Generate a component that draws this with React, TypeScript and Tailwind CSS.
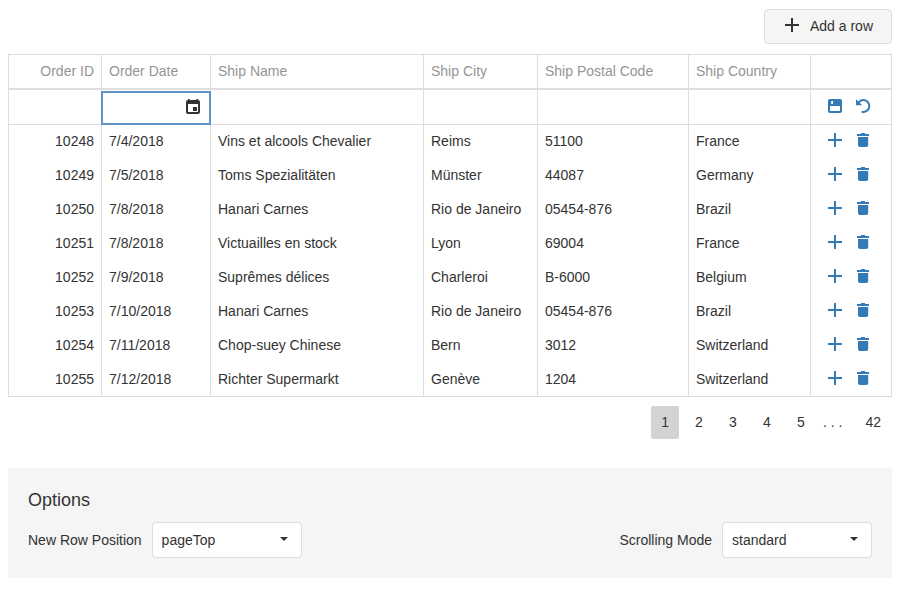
import React from "react";

type Order = [string, string, string, string, string, string];

const columns = [
  { title: "Order ID", width: "w-[93px]" },
  { title: "Order Date", width: "w-[109px]" },
  { title: "Ship Name", width: "" },
  { title: "Ship City", width: "w-[114px]" },
  { title: "Ship Postal Code", width: "w-[151px]" },
  { title: "Ship Country", width: "w-[122px]" },
];

const orders: Order[] = [
  ["10248", "7/4/2018", "Vins et alcools Chevalier", "Reims", "51100", "France"],
  ["10249", "7/5/2018", "Toms Spezialitäten", "Münster", "44087", "Germany"],
  ["10250", "7/8/2018", "Hanari Carnes", "Rio de Janeiro", "05454-876", "Brazil"],
  ["10251", "7/8/2018", "Victuailles en stock", "Lyon", "69004", "France"],
  ["10252", "7/9/2018", "Suprêmes délices", "Charleroi", "B-6000", "Belgium"],
  ["10253", "7/10/2018", "Hanari Carnes", "Rio de Janeiro", "05454-876", "Brazil"],
  ["10254", "7/11/2018", "Chop-suey Chinese", "Bern", "3012", "Switzerland"],
  ["10255", "7/12/2018", "Richter Supermarkt", "Genève", "1204", "Switzerland"],
];

function PlusIcon({ className }: { className: string }) {
  return (
    <svg viewBox="0 0 14 14" className={className} fill="currentColor" aria-hidden="true">
      <path d="M6 0h2v6h6v2H8v6H6V8H0V6h6z" />
    </svg>
  );
}

function TrashIcon() {
  return (
    <svg viewBox="0 0 14 14" className="size-3.5" fill="currentColor" aria-hidden="true">
      <path d="M5 0h4v1h4v1.900H1V1h4zM2 3.900h10.200v8.100a2 2 0 0 1-2 2H4a2 2 0 0 1-2-2z" />
    </svg>
  );
}

function SaveIcon() {
  return (
    <svg viewBox="0 0 14 14" className="size-3.5" fill="currentColor" aria-hidden="true">
      <path
        fillRule="evenodd"
        d="M2 0h10a2 2 0 0 1 2 2v10a2 2 0 0 1-2 2H2a2 2 0 0 1-2-2V2a2 2 0 0 1 2-2zM3.200 2v3h1.800V2zM2 7v5h10V7z"
      />
    </svg>
  );
}

function UndoIcon() {
  return (
    <svg viewBox="0 0 14 14" className="size-3.5 overflow-visible" fill="none" aria-hidden="true">
      <path d="M2.500 3.600C3.800 1.800 5.500 1 7.300 1a6 6 0 0 1 0 12c-.6 0-1.100-.1-1.600-.2" stroke="currentColor" strokeWidth="2" />
      <path d="M0 0.300v6h6.200z" fill="currentColor" />
    </svg>
  );
}

function CalendarIcon() {
  return (
    <svg viewBox="0 0 14 15" className="h-[15px] w-3.5" fill="currentColor" aria-hidden="true">
      <path
        fillRule="evenodd"
        d="M2 0h1.700v1h6.600V0H12v1a2 2 0 0 1 2 2v10a2 2 0 0 1-2 2H2a2 2 0 0 1-2-2V3a2 2 0 0 1 2-2zM2 5v8h10V5z"
      />
      <path d="M7 8h4v4H7z" />
    </svg>
  );
}

function IconButton({ label, children }: { label: string; children: React.ReactNode }) {
  return (
    <button type="button" aria-label={label} className="flex size-3.5 items-center justify-center text-[#337ab7]">
      {children}
    </button>
  );
}

function OptionSelect({ id, label, options }: { id: string; label: string; options: string[] }) {
  return (
    <div className="flex items-center gap-2.5">
      <label htmlFor={id}>{label}</label>
      <div className="relative">
        <select
          id={id}
          className="block h-9 w-[150px] appearance-none rounded border border-[#ddd] bg-white px-[9px] outline-none"
        >
          {options.map((option) => (
            <option key={option}>{option}</option>
          ))}
        </select>
        <svg
          viewBox="0 0 8 4"
          className="pointer-events-none absolute top-[15px] right-3.5 h-1 w-2"
          fill="currentColor"
          aria-hidden="true"
        >
          <path d="M0 0h8L4 4z" />
        </svg>
      </div>
    </div>
  );
}

export default function App() {
  const cell = "border-r border-[#ddd] px-[7px] pb-0.5";
  return (
    <main className="px-2 pt-[9px] font-['Liberation_Sans',Arial,sans-serif] text-sm leading-[18px] text-[#333]">
      <div className="flex justify-end">
        <button
          type="button"
          className="flex h-[35px] items-center rounded border border-[#ddd] bg-[#f5f5f5] px-[18px] pb-0.5"
        >
          <PlusIcon className="mr-[11px] mb-0.5 ml-0.5 size-3.5" />
          Add a row
        </button>
      </div>

      <table className="mt-2.5 w-full table-fixed border-separate border-spacing-0 border border-[#ddd]">
        <thead>
          <tr className="h-[35px]">
            {columns.map((column, index) => (
              <th
                key={column.title}
                className={`${cell} ${column.width} border-b-2 font-normal text-[#959595] ${index === 0 ? "text-right" : "text-left"}`}
              >
                {column.title}
              </th>
            ))}
            <th className="w-20 border-b-2 border-[#ddd]" aria-label="Actions" />
          </tr>
        </thead>
        <tbody>
          <tr className="h-[35px]">
            {columns.map((column, index) =>
              index === 1 ? (
                <td key={column.title} className="relative border-r border-b border-[#ddd]">
                  <div className="absolute top-px -right-px bottom-[-1px] -left-px flex items-center border-2 border-[#5c95c5]">
                    <input aria-label="Order Date" className="h-full min-w-0 flex-1 bg-transparent px-[6px] outline-none" />
                    <button type="button" aria-label="Select date" className="mr-[9px] pb-1">
                      <CalendarIcon />
                    </button>
                  </div>
                </td>
              ) : (
                <td key={column.title} className={`${cell} border-b`} />
              ),
            )}
            <td className="border-b border-[#ddd]">
              <div className="flex justify-center gap-3.5 pr-1 pb-0.5">
                <IconButton label="Save">
                  <SaveIcon />
                </IconButton>
                <IconButton label="Cancel">
                  <UndoIcon />
                </IconButton>
              </div>
            </td>
          </tr>
          {orders.map((order) => (
            <tr key={order[0]} className="h-[34px] last:h-[33px]">
              {order.map((value, index) => (
                <td key={columns[index].title} className={`${cell} ${index === 0 ? "text-right" : ""}`}>
                  {value}
                </td>
              ))}
              <td>
                <div className="flex justify-center gap-3.5 pr-1 pb-1">
                  <IconButton label="Add">
                    <PlusIcon className="size-3.5" />
                  </IconButton>
                  <IconButton label="Delete">
                    <TrashIcon />
                  </IconButton>
                </div>
              </td>
            </tr>
          ))}
        </tbody>
      </table>

      <nav aria-label="Pages" className="mt-[9px] flex justify-end">
        <button type="button" aria-current="page" className="h-[33px] rounded-xs bg-[#d3d3d3] px-2.5 pb-0.5">
          1
        </button>
        <div className="flex gap-1.5 pl-1.5">
          {["2", "3", "4", "5"].map((page) => (
            <button key={page} type="button" className="h-[33px] w-7 pb-0.5">
              {page}
            </button>
          ))}
        </div>
        <span className="flex items-center px-2 pb-0.5">. . .</span>
        <button type="button" className="ml-1 h-[33px] px-[11px] pb-0.5">
          42
        </button>
      </nav>

      <section className="mt-[29px] bg-[#f5f5f5] p-5">
        <h2 className="text-lg leading-6">Options</h2>
        <div className="mt-2.5 flex justify-between">
          <OptionSelect
            id="new-row-position"
            label="New Row Position"
            options={["pageTop", "first", "last", "pageBottom", "viewportTop", "viewportBottom"]}
          />
          <OptionSelect id="scrolling-mode" label="Scrolling Mode" options={["standard", "virtual", "infinite"]} />
        </div>
      </section>
    </main>
  );
}
